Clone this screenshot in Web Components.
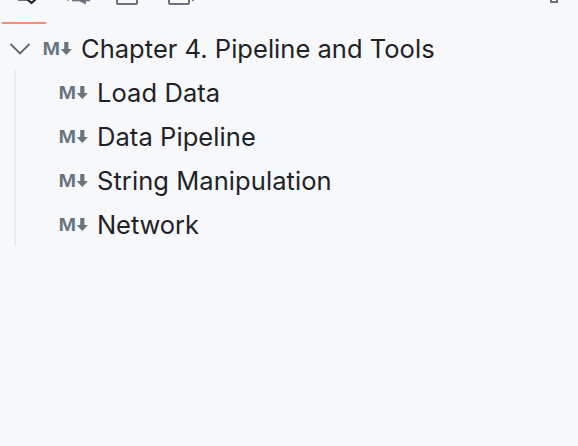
<!DOCTYPE html>
<html lang="en"><head><meta charset="utf-8"><title>Outline</title>
<style>html,body{margin:0;height:100%;background:#f7f8fa;overflow:hidden}</style></head>
<body><outline-panel></outline-panel>
<script>
class ToolStrip extends HTMLElement{
 connectedCallback(){this.attachShadow({mode:'open'}).innerHTML=`<style>
 :host{display:block;height:26px}svg{display:block}</style>
 <svg width="578" height="26" viewBox="0 0 578 26" fill="none" stroke="#69727c" stroke-width="2">
 <path d="M18 0H28"/><path d="M28 -2V0L31.5 3L35 0V-2" stroke="#1f2328" stroke-width="2.2" stroke-linejoin="round"/>
 <path d="M67 0H69" stroke-opacity=".6"/><path d="M72 0H90" stroke-width="2.6"/><path d="M79 0L85 4V0Z" fill="#69727c" stroke="none"/><path d="M79 0L85 3V0" stroke-width="1.6"/>
 <path d="M117 -4V3Q117 4 118 4H136Q137 4 137 3V-4"/>
 <path d="M169 -4V3Q169 4 170 4H188Q189 4 189 3V-4M192 0H194"/>
 <path d="M551 -4V2H557V-4"/>
 <path d="M2 23H46" stroke="#ff8a73"/></svg>`}
}
class MarkdownIcon extends HTMLElement{
 connectedCallback(){this.attachShadow({mode:'open'}).innerHTML=`<style>
 :host{display:block;width:38px;height:44px}svg{display:block}text{font:700 18px "Liberation Sans",sans-serif}</style>
 <svg width="30" height="44" viewBox="0 0 30 44" fill="#69757e"><text x="-.4" y="29" textLength="17.6" lengthAdjust="spacingAndGlyphs">M</text>
 <path d="M21.2 16H25.4V23H28.9L23.3 29L17.7 23H21.2Z"/></svg>`}
}
class TreeItem extends HTMLElement{
 connectedCallback(){this.attachShadow({mode:'open'}).innerHTML=`<style>
 :host{display:flex;height:44px}
 .label{font:400 25.5px/46px Inter,sans-serif;color:#1f2328;white-space:nowrap;letter-spacing:var(--track,0)}</style>
 <markdown-icon></markdown-icon><span class="label"><slot></slot></span>`}
}
class OutlinePanel extends HTMLElement{
 connectedCallback(){this.attachShadow({mode:'open'}).innerHTML=`<style>
 :host{display:block}.root{display:grid;grid-template-columns:43px auto;--track:.03px}
 .root svg{display:block}.children{margin-left:14px;border-left:2px solid #ebecee;padding-left:43px;height:176px;--track:.07px}
 .children tree-item:last-child{--track:-.1px}</style>
 <tool-strip></tool-strip>
 <div class="root"><svg width="43" height="44" fill="none" stroke="#5f6975" stroke-width="1.9"><path d="M10.5 18L20 27.5L29.5 18"/></svg>
 <tree-item>Chapter 4. Pipeline and Tools</tree-item></div>
 <div class="children"><tree-item>Load Data</tree-item><tree-item>Data Pipeline</tree-item><tree-item>String Manipulation</tree-item><tree-item>Network</tree-item></div>`}
}
customElements.define('tool-strip',ToolStrip);
customElements.define('markdown-icon',MarkdownIcon);
customElements.define('tree-item',TreeItem);
customElements.define('outline-panel',OutlinePanel);
</script></body></html>
